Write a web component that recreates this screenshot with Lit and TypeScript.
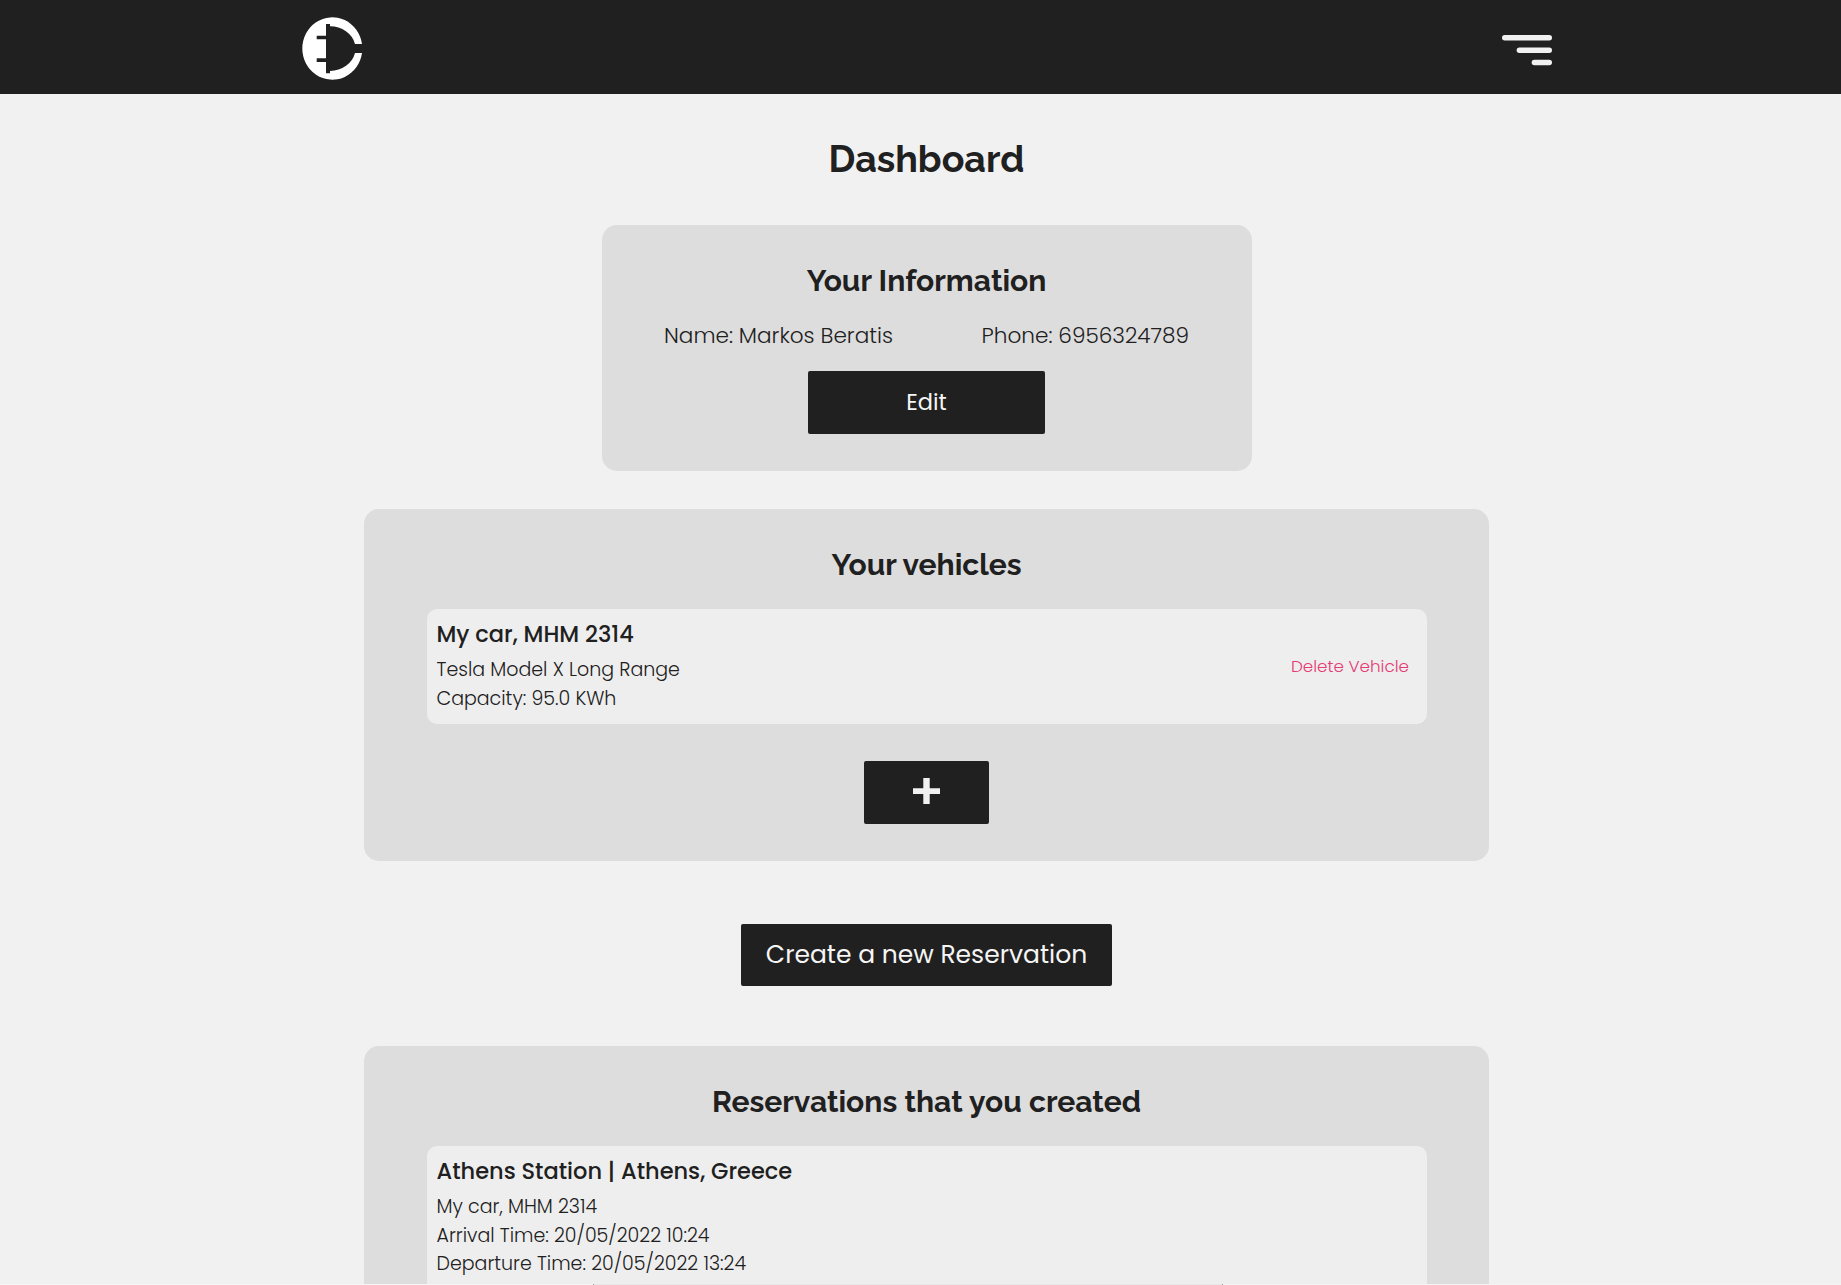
import { LitElement, html, css } from "lit";
import { customElement } from "lit/decorators.js";

@customElement("app-root")
export class AppRoot extends LitElement {
  static styles = css`
    :host {
      display: block;
      height: 1285px;
      overflow: hidden;
      background: #f1f1f1;
      color: #202020;
      font-family: Poppins, "Open Sans", sans-serif;
      font-weight: 300;
    }
    * { box-sizing: border-box; }
    .page { display: flex; flex-direction: column; height: 1285px; }
    .bar {
      flex: none;
      height: 94px;
      background: #202020;
      display: flex;
      justify-content: space-between;
      padding: 0 287px 0 302px;
    }
    .logo { margin-top: 17px; width: 62px; height: 63px; }
    .burger { margin-top: 34px; width: 52px; height: 32px; }
    .main {
      flex: 1;
      min-height: 0;
      overflow: hidden;
      display: flex;
      flex-direction: column;
      align-items: center;
      padding-left: 12px;
    }
    h1, h2, h3, p { margin: 0; white-space: nowrap; flex: none; }
    h1, h2 { font-family: Raleway, Lato, sans-serif; font-weight: 700; }
    h1 { font-size: 37.5px; line-height: 48px; margin-top: 41px; }
    h2 { font-size: 30px; line-height: 36px; }
    .card {
      flex: none;
      background: #ddd;
      border-radius: 15px;
      display: flex;
      flex-direction: column;
      align-items: center;
      width: 1125px;
      padding-top: 38px;
    }
    .info { width: 650px; height: 246px; margin-top: 42px; }
    .vehicles { height: 352px; margin-top: 38px; }
    .reservations { height: 400px; margin-top: 60px; }
    .facts {
      display: flex;
      justify-content: space-between;
      width: 525px;
      margin-top: 21px;
      font-size: 21.6px;
      line-height: 32px;
    }
    .btn {
      flex: none;
      border: 0;
      padding: 0;
      margin: 0;
      border-radius: 2px;
      background: #202020;
      color: #f5f5f5;
      font-family: inherit;
      font-weight: 400;
      display: flex;
      align-items: center;
      justify-content: center;
      white-space: nowrap;
    }
    .edit { width: 237px; height: 63px; margin-top: 19px; font-size: 22.5px; padding-bottom: 1px; }
    .add { width: 125px; height: 63px; margin-top: 37px; padding-bottom: 3px; }
    .plus { width: 27px; height: 26px; }
    .create { width: 371px; height: 62px; margin-top: 63px; font-size: 25px; }
    .item {
      flex: none;
      width: 1000px;
      background: #eee;
      border-radius: 10px;
      margin-top: 26px;
      display: flex;
      justify-content: space-between;
      padding: 8px 17.500px 0 10px;
      font-size: 19px;
    }
    .item-car { height: 115px; }
    .item-res { height: 200px; }
    h3 { font-size: 22.5px; font-weight: 500; line-height: 34px; margin-bottom: 5px; }
    .item p { line-height: 28.6px; }
    .delete { color: #e63a74; font-size: 16.8px; align-self: center; margin-bottom: 10px; }
    .edge {
      flex: none;
      height: 1px;
      background: linear-gradient(90deg, #f6f6f6 593px, #999 593px 594px, #e8e8e8 594px 1222px, #999 1222px 1223px, #f4f4f4 1223px);
    }
  `;

  render() {
    return html`
      <div class="page">
        <header class="bar">
          <svg class="logo" viewBox="0 0 62 63">
            <path fill="#fff" d="M60 27A30 31.200 0 1 0 60 36H53A26 23 0 0 1 28 54V56.300H24V45H14.700V41.300H24V22.300H14.700V18.700H24V7H28V9.300A26 23 0 0 1 53 27Z" />
          </svg>
          <svg class="burger" viewBox="0 0 52 32" stroke="#f1f1f1" stroke-width="5.5" stroke-linecap="round">
            <path d="M2.750 3.800H47.250M17.400 16.200H47.250M32.400 28.400H47.250" />
          </svg>
        </header>
        <main class="main">
          <h1>Dashboard</h1>
          <section class="card info">
            <h2>Your Information</h2>
            <div class="facts"><p>Name: Markos Beratis</p><p>Phone: 6956324789</p></div>
            <button class="btn edit">Edit</button>
          </section>
          <section class="card vehicles">
            <h2>Your vehicles</h2>
            <div class="item item-car">
              <div>
                <h3>My car, MHM 2314</h3>
                <p>Tesla Model X Long Range</p>
                <p>Capacity: 95.0 KWh</p>
              </div>
              <span class="delete">Delete Vehicle</span>
            </div>
            <button class="btn add" aria-label="Add">
              <svg class="plus" viewBox="0 0 27 26"><path fill="#f1f1f1" d="M10.300 0h6.400v10.200H27v5.800H16.700V26h-6.400V16H0v-5.800h10.300z" /></svg>
            </button>
          </section>
          <button class="btn create">Create a new Reservation</button>
          <section class="card reservations">
            <h2>Reservations that you created</h2>
            <div class="item item-res">
              <div>
                <h3>Athens Station | Athens, Greece</h3>
                <p>My car, MHM 2314</p>
                <p>Arrival Time: 20/05/2022 10:24</p>
                <p>Departure Time: 20/05/2022 13:24</p>
              </div>
            </div>
          </section>
        </main>
        <div class="edge"></div>
      </div>
    `;
  }
}
